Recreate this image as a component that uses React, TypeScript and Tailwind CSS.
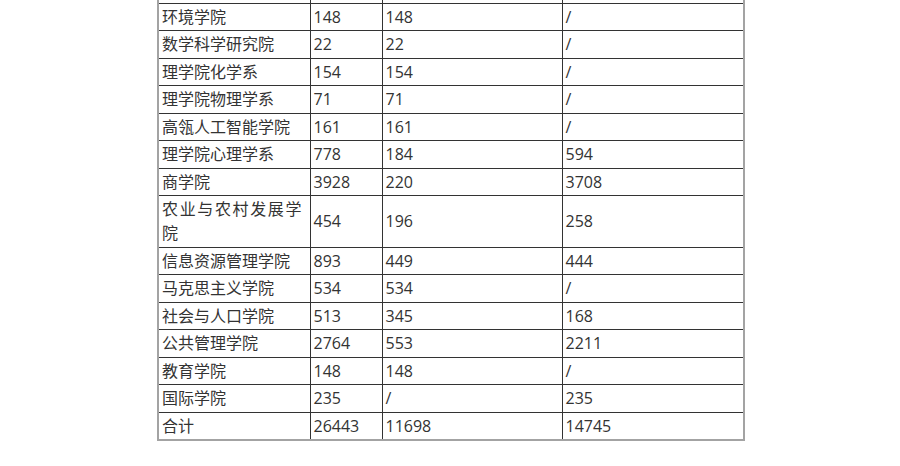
const rows: [string, string, string, string][] = [
  ['环境学院', '148', '148', '/'],
  ['数学科学研究院', '22', '22', '/'],
  ['理学院化学系', '154', '154', '/'],
  ['理学院物理学系', '71', '71', '/'],
  ['高瓴人工智能学院', '161', '161', '/'],
  ['理学院心理学系', '778', '184', '594'],
  ['商学院', '3928', '220', '3708'],
  ['农业与农村发展学院', '454', '196', '258'],
  ['信息资源管理学院', '893', '449', '444'],
  ['马克思主义学院', '534', '534', '/'],
  ['社会与人口学院', '513', '345', '168'],
  ['公共管理学院', '2764', '553', '2211'],
  ['教育学院', '148', '148', '/'],
  ['国际学院', '235', '/', '235'],
  ['合计', '26443', '11698', '14745'],
];

const cell = 'border border-[#333] align-middle pl-[3px] py-[1.25px] leading-[24px]';

export default function App() {
  return (
    <div className="h-[466px] w-full overflow-hidden bg-white">
      <table
        className="mx-auto mt-[-26px] w-[586px] translate-x-[1px] table-fixed border-collapse border-2 border-[#a3a3a3] text-[16px] text-[#333]"
        style={{ fontFamily: '"Open Sans", "Noto Sans CJK SC", sans-serif' }}
      >
        <colgroup>
          <col className="w-[152px]" />
          <col className="w-[72px]" />
          <col className="w-[180px]" />
          <col className="w-[182px]" />
        </colgroup>
        <tbody>
          <tr>
            <td className={cell}>&nbsp;</td>
            <td className={cell}></td>
            <td className={cell}></td>
            <td className={cell}></td>
          </tr>
          {rows.map(([name, total, a, b]) => (
            <tr key={name}>
              <td className={`${cell} pr-[8px] text-justify`}>{name}</td>
              <td className={cell}>{total}</td>
              <td className={cell}>{a}</td>
              <td className={cell}>{b}</td>
            </tr>
          ))}
        </tbody>
      </table>
    </div>
  );
}
